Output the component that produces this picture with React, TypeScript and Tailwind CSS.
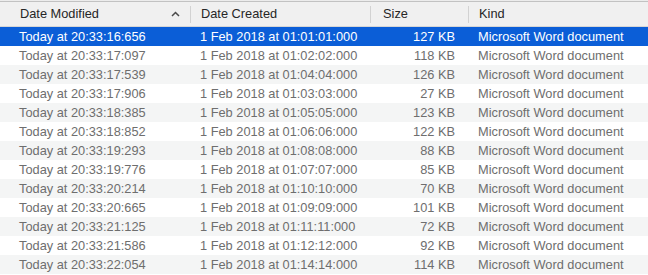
import React from "react";

const rows: [string, string, string][] = [
  ["Today at 20:33:16:656", "1 Feb 2018 at 01:01:01:000", "127 KB"],
  ["Today at 20:33:17:097", "1 Feb 2018 at 01:02:02:000", "118 KB"],
  ["Today at 20:33:17:539", "1 Feb 2018 at 01:04:04:000", "126 KB"],
  ["Today at 20:33:17:906", "1 Feb 2018 at 01:03:03:000", "27 KB"],
  ["Today at 20:33:18:385", "1 Feb 2018 at 01:05:05:000", "123 KB"],
  ["Today at 20:33:18:852", "1 Feb 2018 at 01:06:06:000", "122 KB"],
  ["Today at 20:33:19:293", "1 Feb 2018 at 01:08:08:000", "88 KB"],
  ["Today at 20:33:19:776", "1 Feb 2018 at 01:07:07:000", "85 KB"],
  ["Today at 20:33:20:214", "1 Feb 2018 at 01:10:10:000", "70 KB"],
  ["Today at 20:33:20:665", "1 Feb 2018 at 01:09:09:000", "101 KB"],
  ["Today at 20:33:21:125", "1 Feb 2018 at 01:11:11:000", "72 KB"],
  ["Today at 20:33:21:586", "1 Feb 2018 at 01:12:12:000", "92 KB"],
  ["Today at 20:33:22:054", "1 Feb 2018 at 01:14:14:000", "114 KB"],
];

export default function App() {
  return (
    <div
      className="w-[648px] h-[275px] overflow-hidden bg-white text-[12.8px] leading-none"
      style={{ fontFamily: '"Liberation Sans", Arial, sans-serif' }}
    >
      <div className="h-[27px] bg-[#ececec] pt-px">
        <div className="h-[26px] border-t border-[#c2c2c2] border-b border-b-[#d6d6d6] bg-[#f0f0f0] flex items-center text-[#262626]">
          <div className="w-[190px] h-full flex items-center pl-[20px] pr-[9px]">
            <span className="flex-1">Date Modified</span>
            <svg width="9" height="6" viewBox="0 0 9 6" className="mr-[1px]">
              <path d="M1 5 L4.5 1.5 L8 5" fill="none" stroke="#4a4a4a" strokeWidth="1.5" />
            </svg>
          </div>
          <div className="w-px h-[17px] bg-[#d2d2d2]" />
          <div className="w-[179px] pl-[10px]">Date Created</div>
          <div className="w-px h-[17px] bg-[#d2d2d2]" />
          <div className="w-[97px] pl-[12px]">Size</div>
          <div className="w-px h-[17px] bg-[#d2d2d2]" />
          <div className="flex-1 pl-[10px]">Kind</div>
        </div>
      </div>
      {rows.map((r, i) => {
        const sel = i === 0;
        const bg = sel ? "bg-[#0b5ed7] text-white" : i % 2 === 0 ? "bg-[#f4f5f5] text-[#6e6e6e]" : "bg-white text-[#6e6e6e]";
        return (
          <div key={i} className={`h-[19px] pt-px flex items-center ${bg}`}>
            <div className="w-[190px] pl-[19px]">{r[0]}</div>
            <div className="w-[180px] pl-[10px]">{r[1]}</div>
            <div className="w-[98px] pr-[13px] text-right">{r[2]}</div>
            <div className="flex-1 pl-[10px]">Microsoft Word document</div>
          </div>
        );
      })}
    </div>
  );
}
